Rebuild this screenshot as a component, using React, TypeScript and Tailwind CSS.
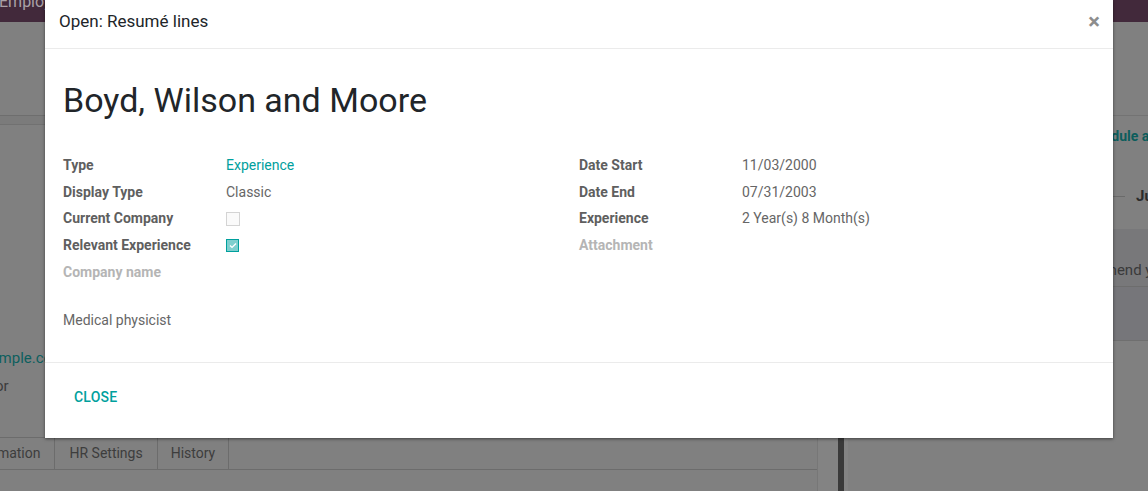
const leftRows: { label: string; value?: React.ReactNode; empty?: boolean }[] = [
	{ label: "Type", value: <span className="text-[#00a09d]">Experience</span> },
	{ label: "Display Type", value: "Classic" },
	{ label: "Current Company", value: <span className="block w-[14px] h-[14px] border border-[#d4d4d4] bg-[#fafafa]"></span> },
	{
		label: "Relevant Experience",
		value: (
			<span className="flex items-center justify-center w-[13px] h-[13px] border border-[#00a09d] bg-[#7fcfce]">
				<svg width="8" height="7" viewBox="0 0 8 7"><path d="M1 3.6 L3 5.4 L7 1.4" fill="none" stroke="#fff" strokeWidth="1.4" /></svg>
			</span>
		),
	},
	{ label: "Company name", empty: true },
]

const rightRows: { label: string; value?: string; empty?: boolean }[] = [
	{ label: "Date Start", value: "11/03/2000" },
	{ label: "Date End", value: "07/31/2003" },
	{ label: "Experience", value: "2 Year(s) 8 Month(s)" },
	{ label: "Attachment", empty: true },
]

const FieldGroup = ({ rows }: { rows: { label: string; value?: React.ReactNode; empty?: boolean }[] }) => (
	<div className="w-[516px] flex flex-col">
		{rows.map((r) => (
			<div key={r.label} className="flex items-center h-[26.7px]">
				<div className={`w-[163px] font-bold ${r.empty ? "text-[#b5b5b5]" : "text-[#5f5f5f]"}`}>{r.label}</div>
				<div className="text-[#666666] flex items-center">{r.value}</div>
			</div>
		))}
	</div>
)

const App = () => {
	return (
		<div className="relative w-[1148px] h-[491px] overflow-hidden bg-[#808080] font-['Roboto',sans-serif] text-[14px]">
			{/* dimmed page behind the dialog */}
			<header className="h-[22px] bg-[#42293b] overflow-hidden">
				<span className="block -mt-[10px] -ml-[1px] text-[16px] text-[#a9a1a7]">Employees</span>
			</header>
			<div className="flex h-[469px]">
				<main className="w-[817px] shrink-0 flex flex-col">
					<div className="h-[94px] border-b border-[#6e6e6e]"></div>
					<div className="h-[9px] bg-[#7b7b7b] border-b border-[#717171]"></div>
					<div className="h-[312px] flex flex-col justify-end pb-[37px]">
						<div className="-ml-[25px] text-[#0d5f5e] text-[15px] leading-[28px] whitespace-nowrap">example.com</div>
						<div className="-ml-[44px] text-[#3c3c3c] text-[15px] leading-[28px] whitespace-nowrap">Director</div>
					</div>
					<div className="flex h-[33px] border-t border-b border-[#6c6c6c] text-[14px] text-[#3d3d3d] whitespace-nowrap">
						<div className="-ml-[93px] pl-[14px] pr-[14px] flex items-center border-r border-[#6c6c6c]">Private Information</div>
						<div className="px-[14px] flex items-center border-r border-[#6c6c6c]">HR Settings</div>
						<div className="px-[13px] flex items-center border-r border-[#6c6c6c]">History</div>
					</div>
				</main>
				<div className="w-[21px] shrink-0 bg-[#838383] border-l border-[#777777]"></div>
				<div className="w-[6px] shrink-0 bg-[#3a3a3a]"></div>
				<aside className="flex-1 min-w-0 flex flex-col border-l-[4px] border-[#848484] overflow-hidden whitespace-nowrap">
					<div className="h-[94px] shrink-0 border-b border-[#737373]"></div>
					<div className="h-[36px] shrink-0 flex items-center pt-[4px] text-[#0c5d5c] font-bold text-[14px]">
						<span className="ml-[232px]">Schedule activity</span>
					</div>
					<div className="h-[24px] shrink-0"></div>
					<div className="h-[40px] shrink-0 flex items-center gap-[11px] text-[#2b2b2b] font-bold text-[15px]">
						<div className="w-[277px] shrink-0 h-px bg-[#6a6a6a]"></div>
						<span>July 2020</span>
					</div>
					<div className="h-[13px] shrink-0"></div>
					<div className="h-[58px] shrink-0 bg-[#78787a] border-b border-[#6d6d6d] flex items-end pb-[5px] text-[#3a3a3a] text-[15px]">
						<span className="ml-[209px]">Recommend your</span>
					</div>
					<div className="h-[54px] shrink-0 bg-[#76767a] border-b border-[#6f6f6f]"></div>
				</aside>
			</div>

			{/* dialog */}
			<div className="absolute left-[45px] top-0 w-[1068px] h-[438px] bg-white flex flex-col shadow-[0_1px_3px_rgba(0,0,0,0.5)]">
				<div className="h-[49px] flex items-center justify-between pl-[14px] pr-[13px] pb-[5px] border-b border-[#ebebeb]">
					<span className="text-[17px] text-[#212529]">Open: Resumé lines</span>
					<span className="text-[22px] font-bold text-[#8d8d8d] leading-none">×</span>
				</div>
				<div className="flex-1 px-[18px]">
					<h1 className="mt-[29px] text-[34px] leading-[44px] text-[#212529]">Boyd, Wilson and Moore</h1>
					<div className="mt-[30px] flex">
						<FieldGroup rows={leftRows} />
						<FieldGroup rows={rightRows} />
					</div>
					<div className="mt-[25px] text-[#666666]">Medical physicist</div>
				</div>
				<div className="h-[76px] border-t border-[#ebebeb] flex items-center pl-[29px] pb-[6px]">
					<span className="text-[14px] font-medium text-[#00a09d] tracking-[0.2px]">CLOSE</span>
				</div>
			</div>
		</div>
	)
}

export default App
